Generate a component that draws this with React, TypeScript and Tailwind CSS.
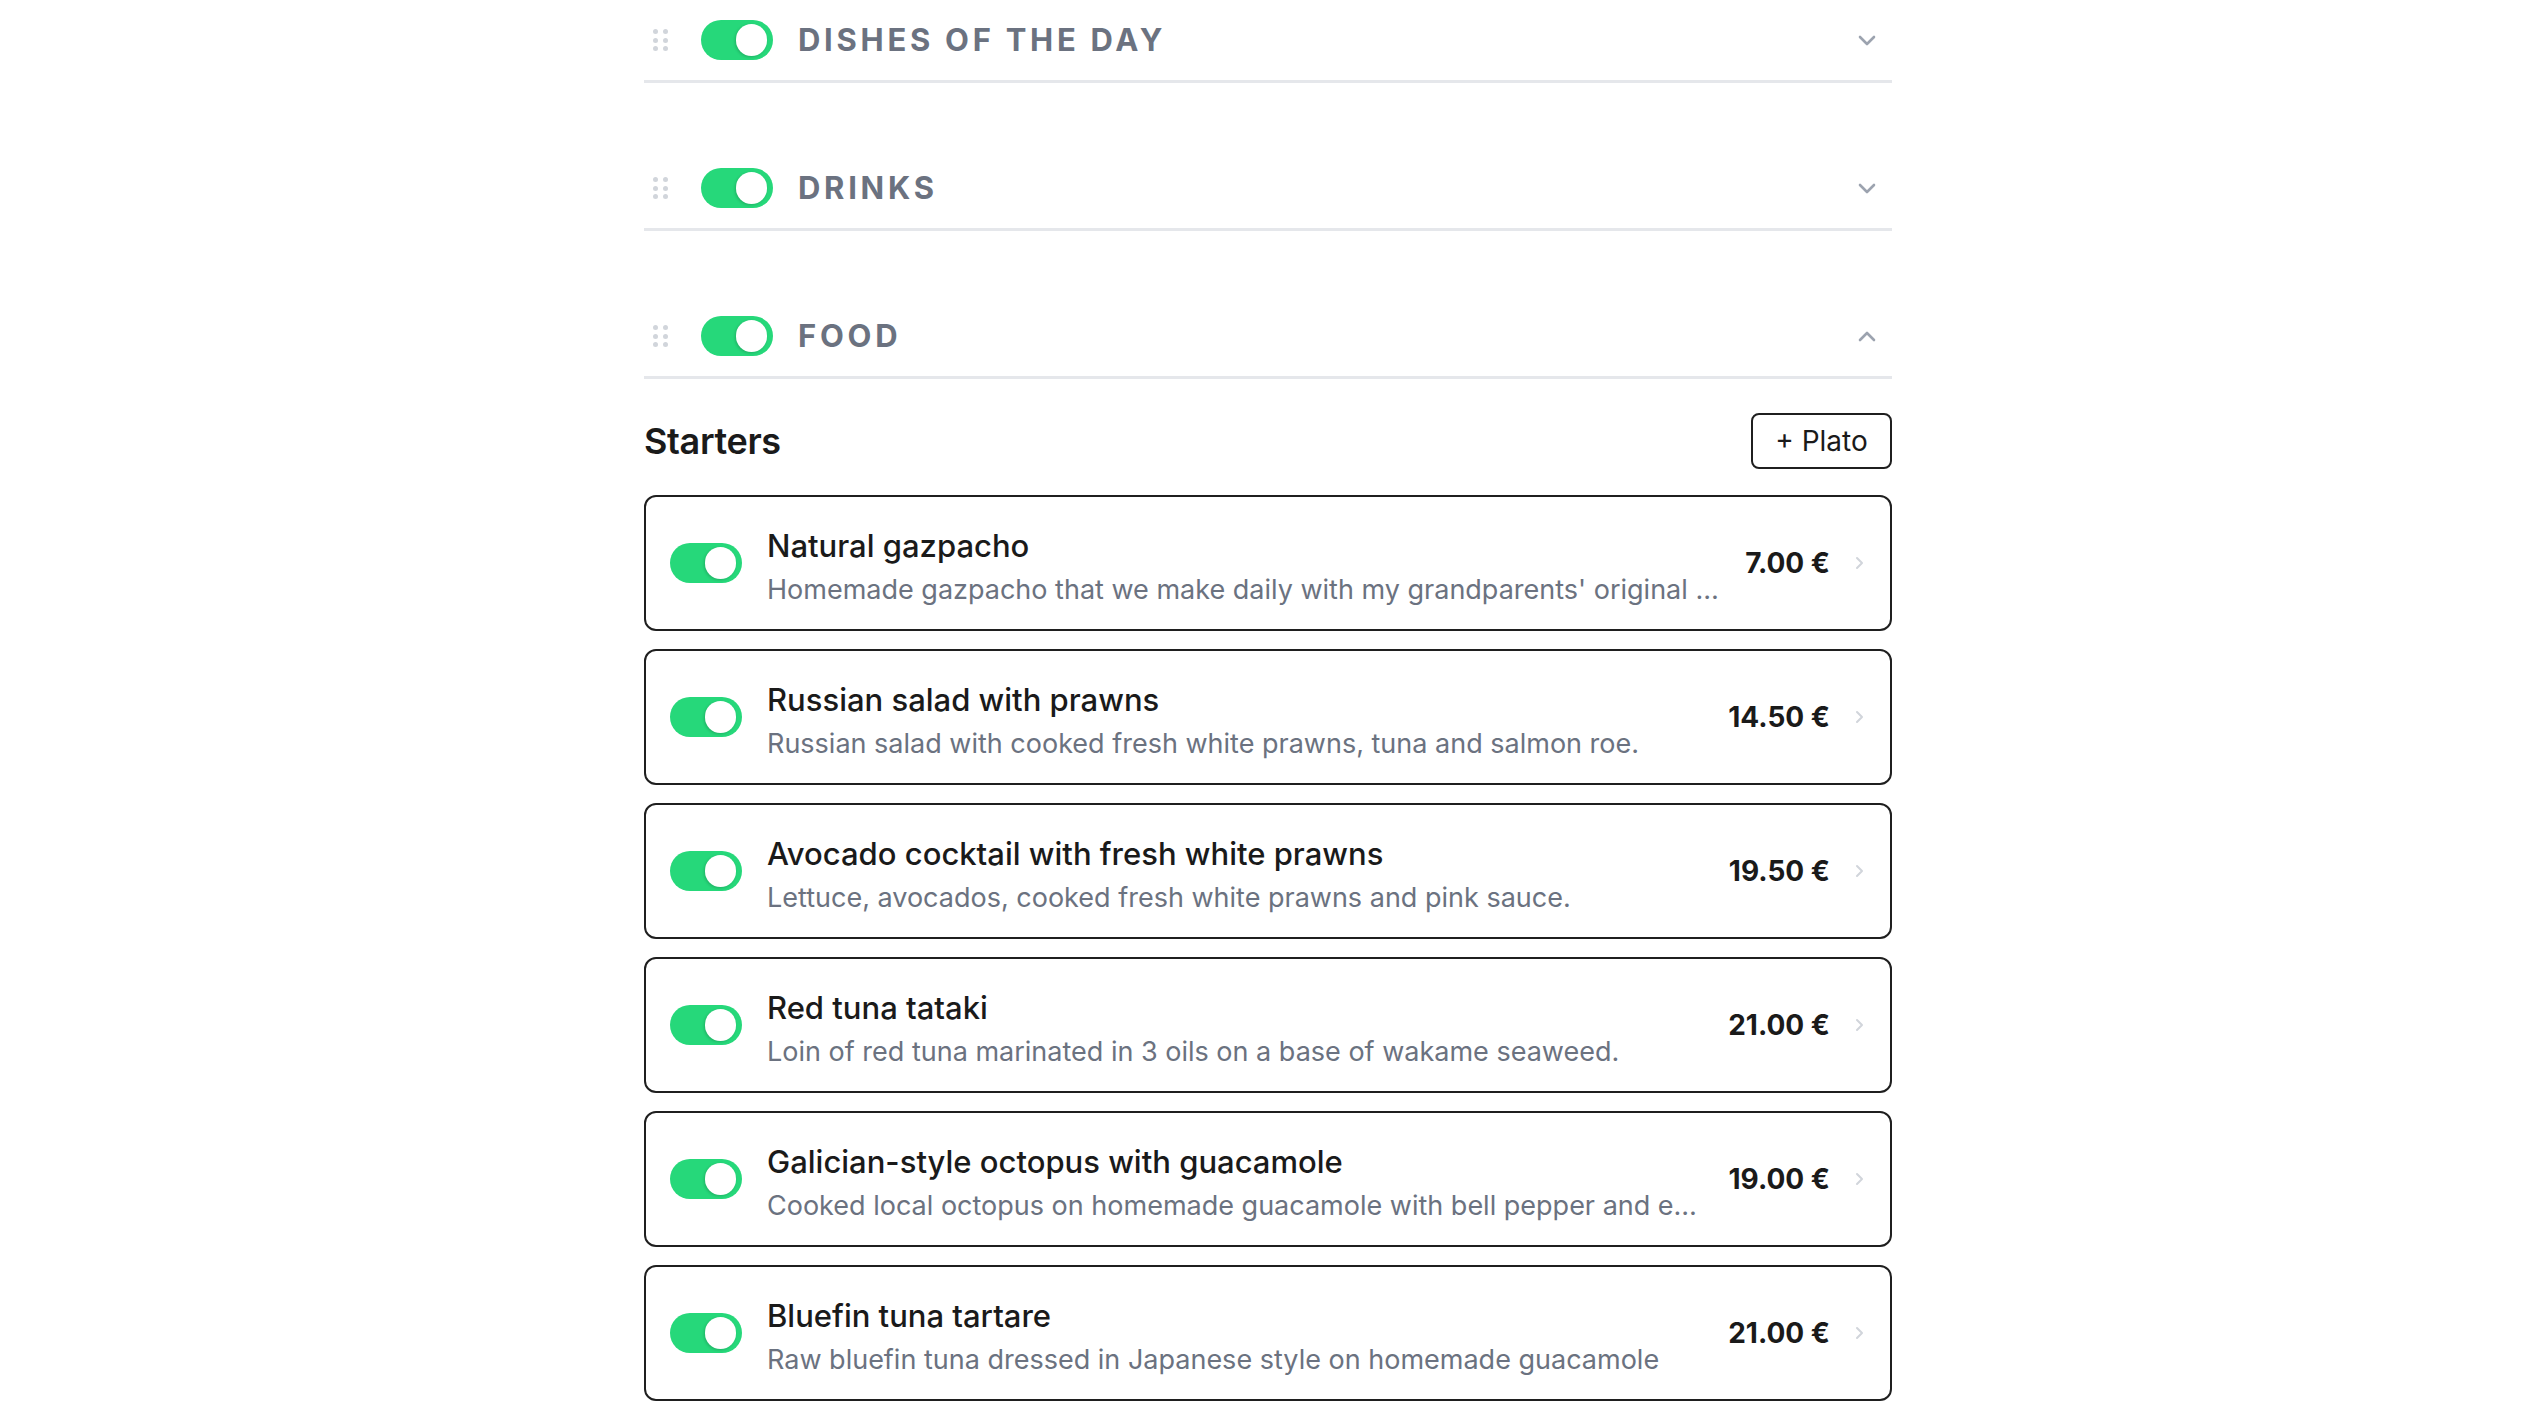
const dishes = [
  {
    name: "Natural gazpacho",
    desc: "Homemade gazpacho that we make daily with my grandparents' original …",
    price: "7.00 €",
  },
  {
    name: "Russian salad with prawns",
    desc: "Russian salad with cooked fresh white prawns, tuna and salmon roe.",
    price: "14.50 €",
  },
  {
    name: "Avocado cocktail with fresh white prawns",
    desc: "Lettuce, avocados, cooked fresh white prawns and pink sauce.",
    price: "19.50 €",
  },
  {
    name: "Red tuna tataki",
    desc: "Loin of red tuna marinated in 3 oils on a base of wakame seaweed.",
    price: "21.00 €",
  },
  {
    name: "Galician-style octopus with guacamole",
    desc: "Cooked local octopus on homemade guacamole with bell pepper and e…",
    price: "19.00 €",
  },
  {
    name: "Bluefin tuna tartare",
    desc: "Raw bluefin tuna dressed in Japanese style on homemade guacamole",
    price: "21.00 €",
  },
];

function Toggle() {
  return (
    <div className="flex h-[40px] w-[72px] shrink-0 items-center justify-end rounded-full bg-[#26d87a] pr-[6px]">
      <div className="h-[32px] w-[31px] rounded-full bg-white shadow-[-1px_1px_3px_rgba(0,0,0,0.18)]" />
    </div>
  );
}

function DragHandle() {
  return (
    <div className="grid grid-cols-2 gap-x-[5px] gap-y-[3.5px]">
      {[0, 1, 2, 3, 4, 5].map((i) => (
        <span key={i} className="block h-[5px] w-[5px] rounded-full bg-[#d1d5db]" />
      ))}
    </div>
  );
}

function SectionHeader({ title, open }: { title: string; open?: boolean }) {
  return (
    <div className="flex h-[83px] items-center border-b-[3px] border-[#e5e7eb] pl-[9px] pr-[16px]">
      <DragHandle />
      <div className="ml-[33px]">
        <Toggle />
      </div>
      <h2 className="ml-[25px] flex-1 text-[31px] font-bold uppercase tracking-[0.12em] text-[#6b7280]">
        {title}
      </h2>
      <svg width="18" height="11" viewBox="0 0 18 11" fill="none">
        <path
          d={open ? "M2 9l7-7 7 7" : "M2 2l7 7 7-7"}
          stroke="#9ca3af"
          strokeWidth="2.6"
          strokeLinecap="round"
          strokeLinejoin="round"
        />
      </svg>
    </div>
  );
}

export default function App() {
  return (
    <div className="min-h-screen bg-white font-['Inter','Liberation_Sans',sans-serif] text-[#111827]">
      <div className="ml-[644px] w-[1248px]">
        <section className="mb-[65px]">
          <SectionHeader title="Dishes of the day" />
        </section>
        <section className="mb-[65px]">
          <SectionHeader title="Drinks" />
        </section>
        <section>
          <SectionHeader title="Food" open />
          <div className="mt-[34px] flex items-center justify-between">
            <h3 className="text-[36px] font-semibold tracking-[-0.01em] text-[#1a1a1a]">Starters</h3>
            <button className="flex h-[56px] w-[141px] items-center justify-center rounded-[8px] border-2 border-[#1f1f1f] text-[28px] text-[#1a1a1a]">
              + Plato
            </button>
          </div>
          <ul className="mt-[26px] flex flex-col gap-[18px]">
            {dishes.map((d) => (
              <li
                key={d.name}
                className="flex h-[136px] items-center rounded-[12px] border-2 border-[#1f1f1f] pl-[24px] pr-[26px]"
              >
                <Toggle />
                <div className="ml-[25px] min-w-0 flex-1 pt-[8px]">
                  <p className="truncate text-[31px] font-medium leading-[42px] text-[#1a1a1a]">{d.name}</p>
                  <p className="mt-[4px] truncate text-[27px] leading-[38px] text-[#6b7280]">{d.desc}</p>
                </div>
                <span className="ml-[24px] whitespace-nowrap text-[28px] font-bold text-[#1a1a1a]">{d.price}</span>
                <svg className="ml-[25px] shrink-0" width="9" height="14" viewBox="0 0 9 14" fill="none">
                  <path d="M2 2l5 5-5 5" stroke="#d1d5db" strokeWidth="2" strokeLinecap="round" strokeLinejoin="round" />
                </svg>
              </li>
            ))}
          </ul>
        </section>
      </div>
    </div>
  );
}
